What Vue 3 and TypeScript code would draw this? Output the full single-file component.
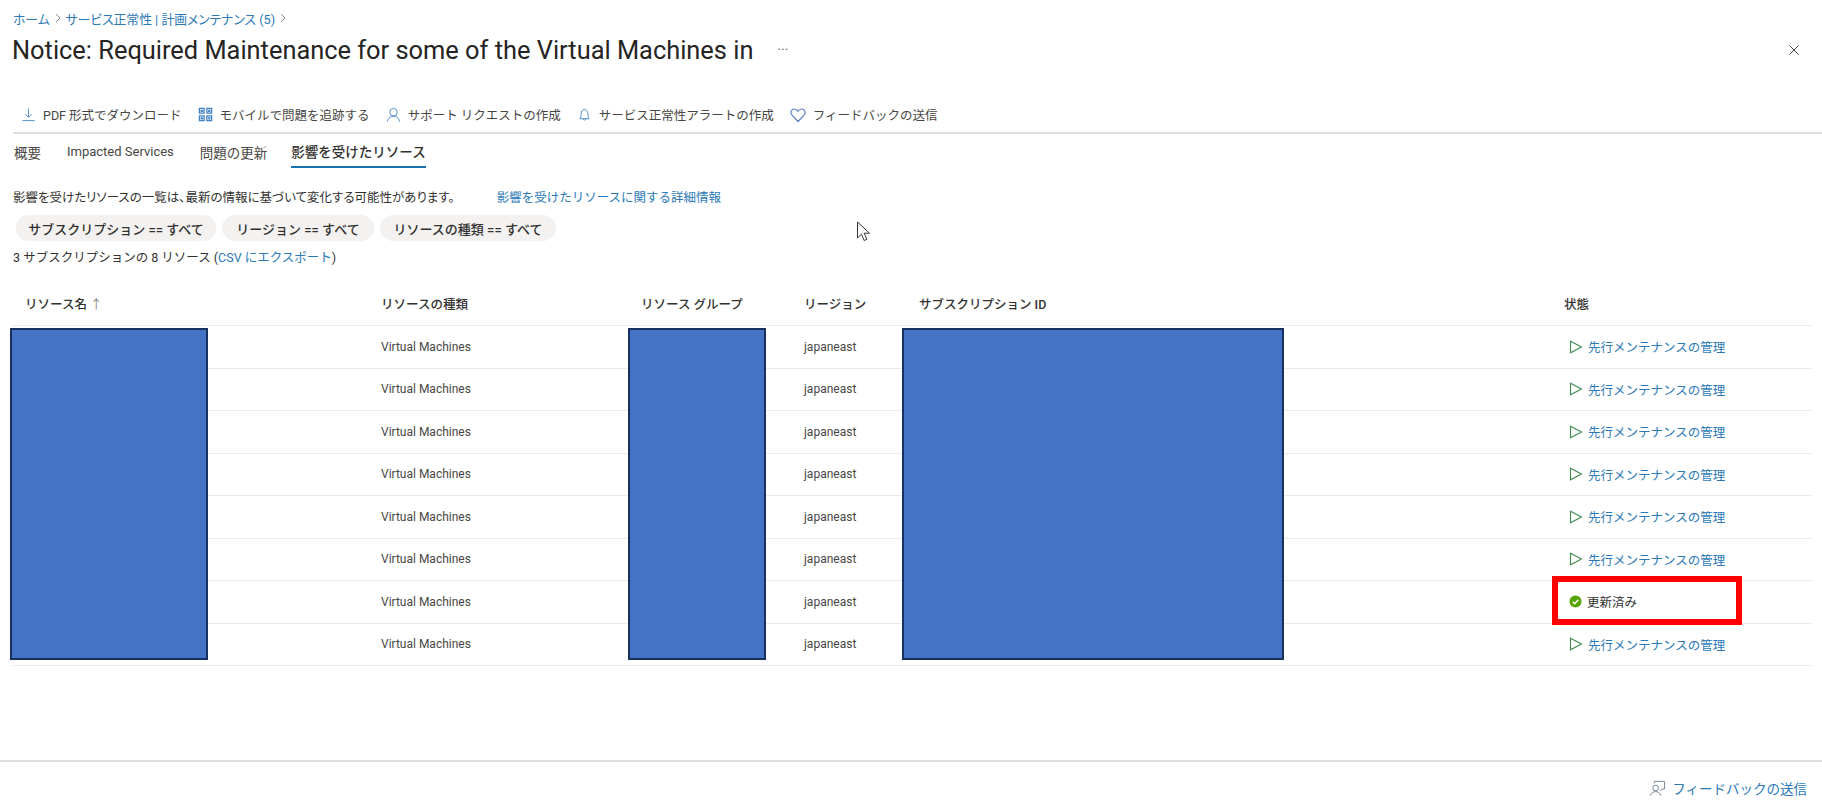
<script setup lang="ts">
interface ResourceRow {
  id: number;
  type: string;
  region: string;
  updated: boolean;
}

defineOptions({ name: "App" });

const tabs = ["概要", "Impacted Services", "問題の更新", "影響を受けたリソース"];
const activeTab = "影響を受けたリソース";
const pills = ["サブスクリプション == すべて", "リージョン == すべて", "リソースの種類 == すべて"];
const columns = ["リソースの種類", "リソース グループ", "リージョン", "サブスクリプション ID", "状態"];

const rows: ResourceRow[] = [1, 2, 3, 4, 5, 6, 7, 8].map((id) => ({
  id,
  type: "Virtual Machines",
  region: "japaneast",
  updated: id === 7,
}));
</script>

<template>
  <div class="page">
    <nav class="crumbs">
      <a>ホーム</a>
      <svg class="chev" viewBox="0 0 8 12"><path d="M2 2l4 4-4 4" /></svg>
      <a>サービス正常性 | 計画メンテナンス (5)</a>
      <svg class="chev" viewBox="0 0 8 12"><path d="M2 2l4 4-4 4" /></svg>
    </nav>

    <header class="title-row">
      <h1>Notice: Required Maintenance for some of the Virtual Machines in</h1>
      <span class="more">···</span>
      <svg class="close" viewBox="0 0 12 12"><path d="M1.5 1.5l9 9M10.5 1.5l-9 9" /></svg>
    </header>

    <div class="toolbar">
      <button class="tool">
        <svg viewBox="0 0 16 16" class="ico"><path d="M8 1.5v9M4.5 7.5L8 11l3.5-3.5M1.5 14.5h13" /></svg>
        PDF 形式でダウンロード
      </button>
      <button class="tool">
        <svg viewBox="0 0 16 16" class="ico qr">
          <path d="M1.5 1.5h5v5h-5zM9.5 1.5h5v5h-5zM1.5 9.5h5v5h-5zM9.5 9.5h5v5h-5z" />
          <path d="M3.5 3.5h1v1h-1zM11.5 3.5h1v1h-1zM3.5 11.5h1v1h-1zM11.5 11.5h1v1h-1z" />
        </svg>
        モバイルで問題を追跡する
      </button>
      <button class="tool">
        <svg viewBox="0 0 16 16" class="ico"><circle cx="8" cy="5.5" r="4" /><path d="M1.5 15.5c.6-3.6 3-5.6 6.500-5.600s5.900 2 6.500 5.600" /></svg>
        サポート リクエストの作成
      </button>
      <button class="tool">
        <svg viewBox="0 0 16 16" class="ico"><path d="M3 12.500c1-1 1.300-2 1.300-4.500 0-3 1.500-5.500 3.700-5.500s3.700 2.500 3.700 5.500c0 2.500.3 3.500 1.300 4.500zM6.500 12.500c0 2 3 2 3 0" /></svg>
        サービス正常性アラートの作成
      </button>
      <button class="tool">
        <svg viewBox="0 0 16 16" class="ico heart"><path d="M8 14.500L1.800 7.800C-.2 5.200 1.500 2 4.300 2 6 2 7.200 3 8 4.300 8.800 3 10 2 11.700 2c2.800 0 4.500 3.200 2.500 5.800z" /></svg>
        フィードバックの送信
      </button>
    </div>

    <div class="tabs">
      <span
        v-for="tab in tabs"
        :key="tab"
        class="tab"
        :class="{ active: tab === activeTab, latin: tab === 'Impacted Services' }"
      >{{ tab }}</span>
    </div>

    <p class="info">
      <span class="info-text">影響を受けたリソースの一覧は、最新の情報に基づいて変化する可能性があります。</span>
      <a class="info-link">影響を受けたリソースに関する詳細情報</a>
    </p>

    <div class="pills">
      <span v-for="pill in pills" :key="pill" class="pill">{{ pill }}</span>
    </div>

    <p class="count">3 サブスクリプションの 8 リソース (<a>CSV にエクスポート</a>)</p>

    <section class="table">
      <div class="row head">
        <span>リソース名 <i class="sort">↑</i></span>
        <span v-for="col in columns" :key="col">{{ col }}</span>
      </div>
      <div class="body">
        <div v-for="row in rows" :key="row.id" class="row">
          <span></span>
          <span>{{ row.type }}</span>
          <span></span>
          <span>{{ row.region }}</span>
          <span></span>
          <span v-if="row.updated" class="status done">
            <svg viewBox="0 0 14 14" class="check">
              <circle cx="7" cy="7" r="6.500" />
              <path d="M3.900 7.200l2.200 2.200 4-4.200" />
            </svg>
            更新済み
          </span>
          <a v-else class="status">
            <svg viewBox="0 0 14 14" class="play"><path d="M1.500 1.200L12.500 7 1.500 12.800z" /></svg>
            先行メンテナンスの管理
          </a>
        </div>
        <!-- redaction blocks lying over the table -->
        <div class="mask mask-name"></div>
        <div class="mask mask-group"></div>
        <div class="mask mask-sub"></div>
        <div class="highlight"></div>
      </div>
    </section>

    <footer class="footer">
      <a class="feedback">
        <svg viewBox="0 0 18 18" class="ico-feedback">
          <circle cx="7" cy="8.500" r="3" />
          <path d="M1.500 16.500c.5-2.800 2.800-4.200 5.500-4.200s5 1.400 5.500 4.200M5.500 3.500V1.500h11v8h-3l-1.500 2" />
        </svg>
        フィードバックの送信
      </a>
    </footer>

    <svg class="cursor" viewBox="0 0 14 22">
      <path d="M1 1v16l4-3.800 2.600 6.300 2.700-1.200L7.700 12.200H13z" />
    </svg>
  </div>
</template>

<style scoped>
.page {
  position: relative;
  display: flex;
  flex-direction: column;
  height: 812px;
  overflow: hidden;
  background: #fff;
  color: #323130;
  font-family: Roboto, "Noto Sans CJK JP", sans-serif;
  font-size: 12.5px;
}

a {
  color: #2b79b6;
}

.crumbs {
  display: flex;
  align-items: center;
  gap: 4px;
  height: 18px;
  margin-top: 9px;
  padding-left: 13px;
  font-size: 12.800px;
  font-feature-settings: "palt";
}

.chev {
  width: 8px;
  height: 12px;
  fill: none;
  stroke: #8a8886;
  stroke-width: 1;
}

.title-row {
  display: flex;
  align-items: center;
  height: 40px;
  margin-top: 3px;
  padding: 0 22px 0 12px;
}

.title-row h1 {
  margin: 0;
  font-size: 25.400px;
  font-weight: 400;
  color: #252423;
  white-space: nowrap;
}

.more {
  margin-left: 24px;
  color: #605e5c;
  font-size: 14px;
}

.close {
  width: 12px;
  height: 12px;
  margin-left: auto;
  fill: none;
  stroke: #484644;
  stroke-width: 1;
}

.toolbar {
  display: flex;
  align-items: center;
  gap: 16px;
  height: 33px;
  margin: 28px 0 0 13px;
  padding: 0 0 1px 8px;
  border-bottom: 2px solid #e1dfdd;
  box-sizing: content-box;
}

.tool {
  display: flex;
  align-items: center;
  gap: 7px;
  padding: 0;
  border: 0;
  background: none;
  color: #484644;
  font: inherit;
  white-space: nowrap;
}

.ico {
  width: 15px;
  height: 15px;
  fill: none;
  stroke: #4d8ac6;
  stroke-width: 1;
}

.ico.qr {
  stroke: #3f7fc4;
  stroke-width: 1.400;
}

.ico.heart {
  width: 16px;
  height: 16px;
  stroke: #5f7fc7;
  stroke-width: 1.200;
}

.tabs {
  display: flex;
  gap: 26px;
  height: 35px;
  margin: 1px 0 0 14px;
}

.tab {
  display: flex;
  align-items: center;
  height: 33px;
  color: #484644;
  font-size: 13.500px;
  box-sizing: border-box;
}

.tab.latin {
  font-size: 13px;
}

.tab.active {
  margin-left: -2px;
  color: #323130;
  font-weight: 500;
  border-bottom: 2px solid #1a6fad;
}

.info {
  margin: 18px 0 0 13px;
  height: 20px;
  line-height: 20px;
  white-space: nowrap;
}

.info-text {
  font-feature-settings: "palt";
}

.info-link {
  margin-left: 42px;
}

.pills {
  display: flex;
  gap: 6px;
  margin: 7px 0 0 16px;
}

.pill {
  display: flex;
  align-items: center;
  justify-content: center;
  height: 26px;
  border-radius: 13px;
  background: #f3f2f1;
  font-size: 13px;
  font-weight: 500;
  white-space: nowrap;
}

.pill:nth-child(1) {
  width: 200px;
}

.pill:nth-child(2) {
  width: 152px;
}

.pill:nth-child(3) {
  width: 176px;
}

.count {
  height: 20px;
  margin: 7px 0 0 13px;
  line-height: 20px;
}

.table {
  margin: 0 10px 0 12px;
}

.row {
  display: grid;
  grid-template-columns: 356px 260px 163px 115px 645px 261px;
  align-items: center;
  height: 42.500px;
  border-bottom: 1px solid #edebe9;
  box-sizing: border-box;
  font-size: 12px;
  color: #484644;
}

.row > span {
  padding-left: 13px;
}

.row.head {
  height: 58px;
  padding-top: 13px;
  color: #323130;
  font-size: 12.500px;
  font-weight: 500;
}

.sort {
  font-style: normal;
  font-weight: 400;
  color: #8a8886;
}

.body {
  position: relative;
}

.status {
  display: flex;
  align-items: center;
  gap: 5px;
  padding-left: 18px;
  font-size: 12.500px;
}

.status.done {
  color: #323130;
  padding-left: 18px;
}

.play {
  width: 14px;
  height: 14px;
  fill: none;
  stroke: #3f8a4f;
  stroke-width: 1.100;
}

.check {
  width: 13px;
  height: 13px;
  flex: none;
}

.check circle {
  fill: #57a300;
}

.check path {
  fill: none;
  stroke: #fff;
  stroke-width: 1.600;
}

.mask {
  position: absolute;
  top: 2px;
  height: 332px;
  background: #4472c4;
  border: 2px solid #16305f;
  box-sizing: border-box;
}

.mask-name {
  left: -2px;
  width: 198px;
}

.mask-group {
  left: 616px;
  width: 138px;
}

.mask-sub {
  left: 890px;
  width: 382px;
}

.highlight {
  position: absolute;
  left: 1540px;
  top: 250px;
  width: 190px;
  height: 49px;
  border: 6px solid #ff0000;
  box-sizing: border-box;
}

.footer {
  display: flex;
  align-items: center;
  justify-content: flex-end;
  height: 52px;
  margin-top: auto;
  padding: 2px 15px 0 0;
  border-top: 2px solid #e1dfdd;
  box-sizing: border-box;
}

.feedback {
  display: flex;
  align-items: center;
  gap: 6px;
  font-size: 13.500px;
}

.ico-feedback {
  width: 17px;
  height: 17px;
  fill: none;
  stroke: #6d8297;
  stroke-width: 1;
}

.cursor {
  position: absolute;
  left: 856px;
  top: 221px;
  width: 15px;
  height: 22px;
  fill: #fff;
  stroke: #333;
  stroke-width: 1;
}
</style>
